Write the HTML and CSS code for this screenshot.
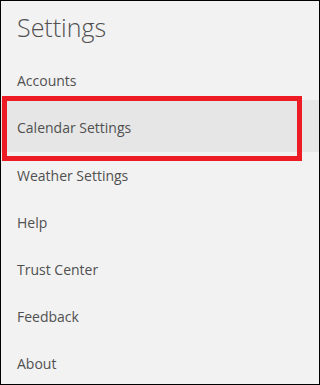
FILE: index.html
```html
<!DOCTYPE html>
<html lang="en">
<head>
    <meta charset="UTF-8">
    <title>Settings</title>
    <link rel="stylesheet" href="styles.css">
</head>
<body>
    <div class="settings-panel">
        <h1 class="panel-title">Settings</h1>
        <ul class="settings-list">
            <li class="settings-item">Accounts</li>
            <li class="settings-item selected">
                Calendar Settings
                <div class="highlight-box"></div>
            </li>
            <li class="settings-item">Weather Settings</li>
            <li class="settings-item">Help</li>
            <li class="settings-item">Trust Center</li>
            <li class="settings-item">Feedback</li>
            <li class="settings-item">About</li>
        </ul>
    </div>
</body>
</html>
```

FILE: styles.css
```css
body {
    margin: 0;
    padding: 0;
    font-family: "Open Sans", "Noto Sans", sans-serif;
    background-color: #f2f2f2;
}

.settings-panel {
    width: 320px;
    height: 385px;
    box-sizing: border-box;
    border: 1px solid #000;
    background-color: #f2f2f2;
    overflow: hidden;
}

.panel-title {
    margin: 0;
    padding: 10px 16px 0 16px;
    font-size: 25px;
    font-weight: 300;
    line-height: 32px;
    color: #505050;
}

.settings-list {
    list-style: none;
    margin: 0;
    padding: 14px 0 0 0;
}

.settings-item {
    height: 47px;
    line-height: 47px;
    padding: 0 16px;
    font-size: 14px;
    color: #505050;
}

.settings-item.selected {
    position: relative;
    margin-top: -4px;
    height: 48px;
    line-height: 48px;
    padding-top: 4px;
    background-color: #e6e6e6;
}

.highlight-box {
    position: absolute;
    top: -4px;
    left: 1px;
    width: 300px;
    height: 65px;
    box-sizing: border-box;
    border: 5px solid #ed1c24;
}
```
